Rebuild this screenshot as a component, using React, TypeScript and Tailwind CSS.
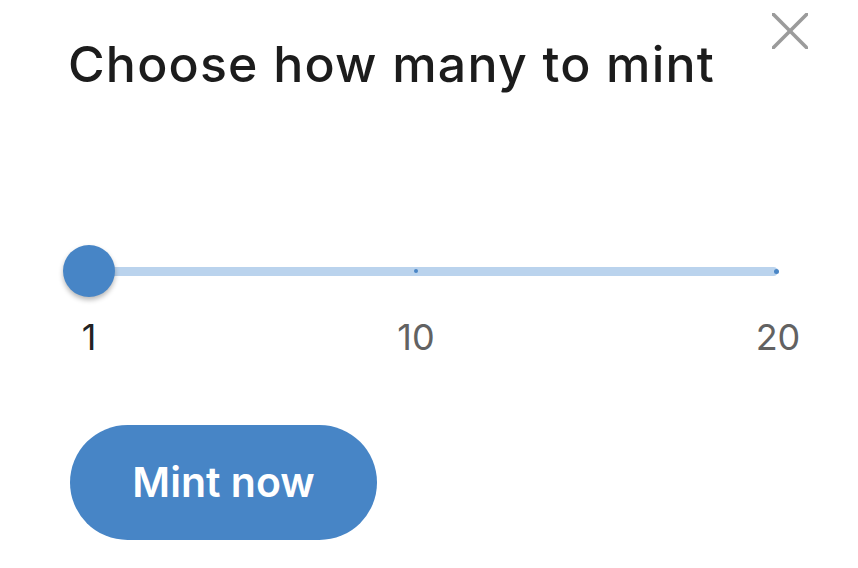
import React from 'react';

const font = { fontFamily: 'Inter, "Noto Sans", sans-serif' };

// positions along the rail are data, so labels sit at their value's spot
const marks = [
    { value: 1, label: '1', left: 'left-[26px]', active: true },
    { value: 10, label: '10', left: 'left-[353px]', active: false },
    { value: 20, label: '20', left: 'left-[715px]', active: false },
];

function CloseIcon() {
    return (
        <button className="absolute right-[50px] top-[13px]" aria-label="close">
            <svg width="36" height="36" viewBox="0 0 36 36" className="block">
                <line x1="1" y1="1" x2="35" y2="35" stroke="#9b9b9b" strokeWidth="3.6" strokeLinecap="round" />
                <line x1="35" y1="1" x2="1" y2="35" stroke="#9b9b9b" strokeWidth="3.6" strokeLinecap="round" />
            </svg>
        </button>
    );
}

function MintSlider() {
    return (
        <div className="flex w-[741px] flex-col gap-[22px]">
            <div className="relative flex h-[52px] items-center px-[26px]">
                <div className="relative h-[9px] flex-1 rounded-full bg-[#bad3ed]">
                    <span className="absolute left-[325px] top-[2.5px] h-[4px] w-[4px] rounded-full bg-[#4a86c6]" />
                    <span className="absolute right-[-1px] top-[2px] h-[5px] w-[5px] rounded-full bg-[#4a86c6]" />
                </div>
                <div className="absolute left-0 top-0 h-[52px] w-[52px] rounded-full bg-[#4785c6] shadow-[0_3px_5px_rgba(0,0,0,0.28)]" />
            </div>
            <div className="relative h-[36px]">
                {marks.map((m) => (
                    <span
                        key={m.value}
                        className={`absolute top-0 ${m.left} -translate-x-1/2 text-[36px] leading-none ${
                            m.active ? 'text-[#222222]' : 'text-[#626262]'
                        }`}
                    >
                        {m.label}
                    </span>
                ))}
            </div>
        </div>
    );
}

export default function App() {
    return (
        <div className="relative h-[568px] w-[858px] overflow-hidden bg-white" style={font}>
            <CloseIcon />
            <div className="flex flex-col items-start pt-[39px]">
                <h2 className="ml-[68px] text-[50px] font-medium leading-none tracking-[1.2px] text-[#1c1c1c]">
                    Choose how many to mint
                </h2>
                <div className="ml-[63px] mt-[156px]">
                    <MintSlider />
                </div>
                <button className="ml-[70px] mt-[70px] flex h-[115px] w-[307px] items-center justify-center rounded-full bg-[#4785c6] text-[41px] font-semibold text-white">
                    Mint now
                </button>
            </div>
        </div>
    );
}
